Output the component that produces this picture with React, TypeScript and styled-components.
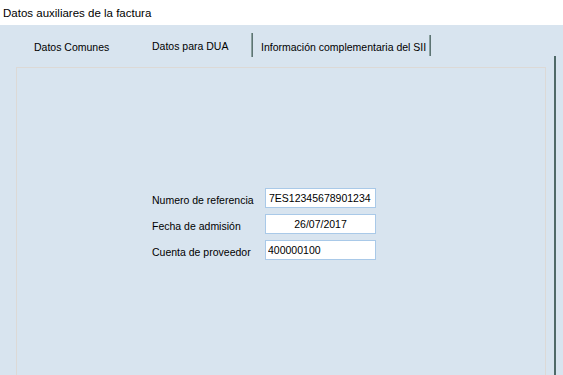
import { Fragment } from "react";
import styled, { createGlobalStyle } from "styled-components";

const GlobalStyle = createGlobalStyle`
  html, body {
    margin: 0;
    padding: 0;
    background: #ffffff;
  }
  body {
    font-family: "Liberation Sans", Arial, sans-serif;
    color: #000000;
  }
`;

const Window = styled.div`
  width: 563px;
  height: 375px;
  display: flex;
  flex-direction: column;
  overflow: hidden;
`;

const TitleBar = styled.header`
  height: 25px;
  box-sizing: border-box;
  padding: 2px 0 0 3px;
  line-height: 23px;
  font-size: 11.5px;
  background: #ffffff;
  white-space: nowrap;
`;

const Body = styled.div`
  flex: 1;
  display: flex;
  flex-direction: column;
  background: #d8e4ef;
  overflow: hidden;
`;

const TabRow = styled.div`
  height: 31px;
  flex-shrink: 0;
  display: flex;
  align-items: flex-start;
  padding-left: 34px;
  position: relative;
  z-index: 1;
`;

const Tab = styled.div<{ $width?: number; $active?: boolean; $pad?: string }>`
  width: ${(p) => (p.$width ? `${p.$width}px` : "auto")};
  padding: ${(p) => p.$pad || "0"};
  margin-top: ${(p) => (p.$active ? 15 : 16)}px;
  font-size: 10.5px;
  line-height: 12px;
  white-space: nowrap;
  cursor: default;
`;

const Separator = styled.div<{ $top: number; $height: number }>`
  width: 2px;
  height: ${(p) => p.$height}px;
  margin-top: ${(p) => p.$top}px;
  background: #5d7473;
  border-left: 1px solid #8aa09f;
  box-sizing: border-box;
`;

const Frame = styled.div`
  flex: 1;
  margin-right: 7px;
  border-right: 2px solid #4f6968;
  padding: 11px 0 0 16px;
`;

const Panel = styled.div`
  width: 530px;
  height: 340px;
  box-sizing: border-box;
  border: 1px solid #dcd9d6;
  padding: 120px 0 0 135px;
`;

const Form = styled.div`
  display: grid;
  grid-template-columns: 113px 111px;
  grid-auto-rows: 20px;
  row-gap: 6px;
  align-items: center;
`;

const Label = styled.label`
  font-size: 10.5px;
  line-height: 12px;
  white-space: nowrap;
  padding-top: 3px;
`;

const Field = styled.input<{ $align?: "left" | "center"; $pad?: number }>`
  width: 111px;
  height: 20px;
  box-sizing: border-box;
  border: 1px solid #a9c9e8;
  background: #ffffff;
  margin: 0;
  padding: 0 0 0 ${(p) => p.$pad ?? 2}px;
  font-family: "Liberation Sans", Arial, sans-serif;
  font-size: 10.5px;
  color: #000000;
  text-align: ${(p) => p.$align || "left"};
  outline: none;
`;

const fields = [
  { label: "Numero de referencia", value: "7ES12345678901234", align: "left" as const, pad: 3 },
  { label: "Fecha de admisión", value: "26/07/2017", align: "center" as const, pad: 0 },
  { label: "Cuenta de proveedor", value: "400000100", align: "left" as const, pad: 2 },
];

const App = () => {
  return (
    <Window>
      <GlobalStyle />
      <TitleBar>Datos auxiliares de la factura</TitleBar>
      <Body>
        <TabRow>
          <Tab $width={118}>Datos Comunes</Tab>
          <Tab $width={99} $active>
            Datos para DUA
          </Tab>
          <Separator $top={8} $height={24} />
          <Tab $pad="0 3px 0 8px">Información complementaria del SII</Tab>
          <Separator $top={10} $height={21} />
        </TabRow>
        <Frame>
          <Panel>
            <Form>
              {fields.map((f) => (
                <Fragment key={f.label}>
                  <Label>{f.label}</Label>
                  <Field readOnly value={f.value} $align={f.align} $pad={f.pad} />
                </Fragment>
              ))}
            </Form>
          </Panel>
        </Frame>
      </Body>
    </Window>
  );
};

export default App;
